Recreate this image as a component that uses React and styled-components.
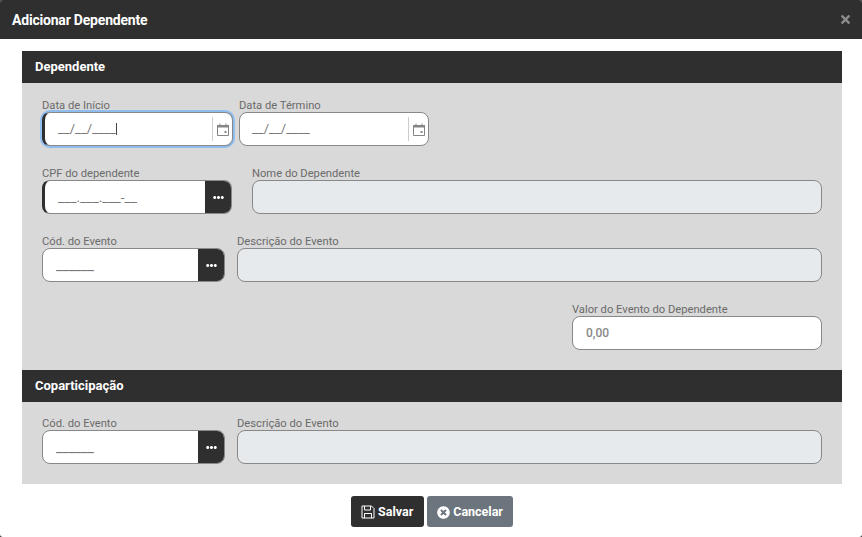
import React from 'react';
import styled, { createGlobalStyle } from 'styled-components';
import { FaEllipsisH, FaTimes, FaTimesCircle } from 'react-icons/fa';

const dark = '#2f2f2f';

const GlobalStyle = createGlobalStyle`
  html, body {
    margin: 0;
    padding: 0;
    background: #3a3a3a;
  }
  * {
    box-sizing: border-box;
  }
`;

const Modal = styled.div`
  width: 862px;
  height: 537px;
  background: #fff;
  border-radius: 3px;
  overflow: hidden;
  font-family: Roboto, "Liberation Sans", sans-serif;
`;
const Header = styled.div`
  height: 39px;
  padding: 0 10px 0 12px;
  display: flex;
  align-items: center;
  justify-content: space-between;
  background: ${dark};
`;
const Title = styled.h1`
  margin: 0;
  font-size: 14px;
  font-weight: 700;
  letter-spacing: -0.2px;
  color: #fff;
`;
const Close = styled.button`
  border: none;
  padding: 0;
  display: flex;
  background: none;
  color: #8c8c8c;
  font-size: 13px;
`;
const Body = styled.div`
  padding: 12px 20px 0 22px;
`;
const SectionBar = styled.div`
  height: 32px;
  padding: 0 0 2px 13px;
  display: flex;
  align-items: center;
  background: ${dark};
  color: #fff;
  font-size: 13px;
  font-weight: 700;
`;
const Panel = styled.div`
  padding: ${(p) => (p.$compact ? 14 : 15)}px 20px 20px;
  display: flex;
  flex-direction: column;
  gap: 20px;
  background: #d9d9d9;
`;
const Row = styled.div`
  display: flex;
  justify-content: ${(p) => (p.$end ? 'flex-end' : 'flex-start')};
  gap: ${(p) => p.$gap}px;
`;
const Field = styled.div`
  width: ${(p) => (p.$width ? `${p.$width}px` : 'auto')};
  flex: ${(p) => (p.$width ? 'none' : 1)};
`;
const Label = styled.label`
  display: block;
  height: 14px;
  font-size: 11.2px;
  line-height: 16px;
  color: #6b6b6b;
`;
const Input = styled.div`
  height: 34px;
  display: flex;
  align-items: stretch;
  overflow: hidden;
  border: 1px solid #888;
  border-left: ${(p) => (p.$required ? `3px solid ${dark}` : '1px solid #888')};
  border-radius: 8px;
  background: ${(p) => (p.$disabled ? '#e7eaed' : '#fff')};
  box-shadow: ${(p) => (p.$focused ? '0 0 0 2px #8fbdf0' : 'none')};
`;
const Mask = styled.span`
  flex: 1;
  padding: 0 0 0 ${(p) => p.$pad}px;
  display: flex;
  align-items: center;
  font-size: ${(p) => p.$size}px;
  font-weight: ${(p) => (p.$strong ? 500 : 400)};
  line-height: 14px;
  color: ${(p) => (p.$strong ? '#888' : '#777')};
  white-space: nowrap;
`;
const Caret = styled.i`
  width: 1px;
  height: 12px;
  margin-top: -1px;
  background: #444;
`;
const CalendarSlot = styled.span`
  width: 20px;
  margin: 4px 0;
  display: flex;
  align-items: center;
  justify-content: flex-start;
  padding-left: 4px;
  border-left: 1px solid #ccc;
  color: #858585;
`;
const DotsButton = styled.button`
  width: 27px;
  margin: -1px -1px -1px 0;
  border: none;
  padding: 0;
  display: flex;
  align-items: center;
  justify-content: center;
  background: ${dark};
  color: #fff;
  font-size: 11px;
`;
const Footer = styled.div`
  padding-top: 12px;
  display: flex;
  justify-content: center;
  gap: 3px;
`;
const Button = styled.button`
  height: 31px;
  padding: 0 10.5px;
  border: none;
  border-radius: 3px;
  display: flex;
  align-items: center;
  gap: 3px;
  background: ${(p) => (p.$secondary ? '#6c757d' : dark)};
  color: #fff;
  font-family: inherit;
  font-size: 12.5px;
  font-weight: 700;
  svg {
    flex: none;
  }
`;
const CancelIcon = styled(FaTimesCircle)`
  margin-top: 2px;
  font-size: 13px;
`;

const CalendarIcon = () => (
  <svg width="12" height="13" viewBox="0 0 12 13" fill="none" stroke="currentColor">
    <path d="M.5 2.5h11v10H.5z" />
    <path d="M0 2h12v2.5H0z" fill="currentColor" stroke="none" />
    <path d="M3 .5v2M9 .5v2" />
    <path d="M7.5 8h2v2h-2z" fill="currentColor" stroke="none" />
  </svg>
);

const SaveIcon = () => (
  <svg width="14" height="14" viewBox="0 0 14 14" fill="none" stroke="currentColor">
    <path d="M1 1h9.5L13 3.5V13H1z" />
    <path d="M3.5 1v4h6V1M3.5 13V8.5h7V13" />
  </svg>
);

const DateField = ({ label, width, focused, required, pad }) => (
  <Field $width={width}>
    <Label>{label}</Label>
    <Input $focused={focused} $required={required}>
      <Mask $pad={pad} $size={13}>
        __/__/____
        {focused && <Caret />}
      </Mask>
      <CalendarSlot>
        <CalendarIcon />
      </CalendarSlot>
    </Input>
  </Field>
);

const LookupField = ({ label, width, mask, size, required }) => (
  <Field $width={width}>
    <Label>{label}</Label>
    <Input $required={required}>
      <Mask $pad={13} $size={size}>{mask}</Mask>
      <DotsButton>
        <FaEllipsisH />
      </DotsButton>
    </Input>
  </Field>
);

const ReadOnlyField = ({ label }) => (
  <Field>
    <Label>{label}</Label>
    <Input $disabled />
  </Field>
);

const App = () => {
  return (
    <Modal>
      <GlobalStyle />
      <Header>
        <Title>Adicionar Dependente</Title>
        <Close>
          <FaTimes />
        </Close>
      </Header>
      <Body>
        <SectionBar>Dependente</SectionBar>
        <Panel>
          <Row $gap={6}>
            <DateField label="Data de Início" width={191} focused required pad={13} />
            <DateField label="Data de Término" width={190} pad={12} />
          </Row>
          <Row $gap={20}>
            <LookupField label="CPF do dependente" width={190} size={13.7} mask="___.___.___-__" required />
            <ReadOnlyField label="Nome do Dependente" />
          </Row>
          <Row $gap={12}>
            <LookupField label="Cód. do Evento" width={183} size={14} mask="______" />
            <ReadOnlyField label="Descrição do Evento" />
          </Row>
          <Row $gap={0} $end>
            <Field $width={250}>
              <Label>Valor do Evento do Dependente</Label>
              <Input>
                <Mask $pad={13} $size={12} $strong>0,00</Mask>
              </Input>
            </Field>
          </Row>
        </Panel>
        <SectionBar>Coparticipação</SectionBar>
        <Panel $compact>
          <Row $gap={12}>
            <LookupField label="Cód. do Evento" width={183} size={14} mask="______" />
            <ReadOnlyField label="Descrição do Evento" />
          </Row>
        </Panel>
        <Footer>
          <Button>
            <SaveIcon />
            Salvar
          </Button>
          <Button $secondary>
            <CancelIcon />
            Cancelar
          </Button>
        </Footer>
      </Body>
    </Modal>
  );
};

export default App;
